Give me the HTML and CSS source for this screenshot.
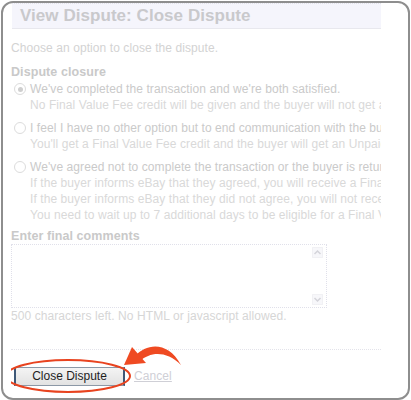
FILE: index.html
```html
<!DOCTYPE html>
<html>
<head>
<meta charset="utf-8">
<link rel="stylesheet" href="styles.css">
</head>
<body>
<div class="frame">
  <div class="content">
    <div class="titlebar"><h1 class="title">View Dispute: Close Dispute</h1></div>
    <p class="intro">Choose an option to close the dispute.</p>
    <div class="label">Dispute closure</div>
    <div class="option">
      <span class="radio checked"></span>
      <div class="otext">
        <div class="main">We've completed the transaction and we're both satisfied.</div>
        <div class="sub">No Final Value Fee credit will be given and the buyer will not get a strike.</div>
      </div>
    </div>
    <div class="option">
      <span class="radio"></span>
      <div class="otext">
        <div class="main">I feel I have no other option but to end communication with the buyer.</div>
        <div class="sub">You'll get a Final Value Fee credit and the buyer will get an Unpaid Item strike.</div>
      </div>
    </div>
    <div class="option">
      <span class="radio"></span>
      <div class="otext">
        <div class="main">We've agreed not to complete the transaction or the buyer is returning the item.</div>
        <div class="sub">If the buyer informs eBay that they agreed, you will receive a Final Value Fee credit.</div>
        <div class="sub">If the buyer informs eBay that they did not agree, you will not receive a credit.</div>
        <div class="sub">You need to wait up to 7 additional days to be eligible for a Final Value Fee credit.</div>
      </div>
    </div>
    <div class="label comments-label">Enter final comments</div>
    <div class="textarea">
      <div class="scroll">
        <svg class="arrow-btn" width="11" height="11" viewBox="0 0 11 11"><rect x="0.5" y="0.5" width="10" height="10" fill="#f7f7fa" stroke="#e6e6ec" stroke-dasharray="1 1"/><path d="M2.5 7 L5.5 4 L8.5 7" fill="none" stroke="#d4d4da" stroke-width="1.5"/></svg>
        <svg class="arrow-btn" width="11" height="11" viewBox="0 0 11 11"><rect x="0.5" y="0.5" width="10" height="10" fill="#f7f7fa" stroke="#e6e6ec" stroke-dasharray="1 1"/><path d="M2.5 4 L5.5 7 L8.5 4" fill="none" stroke="#d4d4da" stroke-width="1.5"/></svg>
      </div>
    </div>
    <div class="hint">500 characters left. No HTML or javascript allowed.</div>
    <div class="separator"></div>
    <div class="actions">
      <button class="btn">Close Dispute</button>
      <a class="cancel" href="#">Cancel</a>
      <svg class="callout" width="200" height="50" viewBox="0 0 200 50">
        <ellipse cx="63" cy="22" rx="62" ry="16" fill="none" stroke="#e8431f" stroke-width="2"/>
        <path d="M130 2 C142 -11 163 -13 176 11 C161 -4 145 -2 135 7 Z" fill="#ef4a22"/>
        <path d="M119 11 L127 -7 L141 9 Z" fill="#ef4a22"/>
      </svg>
    </div>
  </div>
</div>
</body>
</html>
```

FILE: styles.css
```css
html, body {
  margin: 0;
  padding: 0;
  background: #ffffff;
}
body {
  font-family: "Liberation Sans", Arial, sans-serif;
  font-size: 12px;
  letter-spacing: 0.08px;
  color: #d2d2d2;
}
.frame {
  margin: 1px 1px 0 1px;
  height: 395px;
  border: 2px solid #8e8e8e;
  border-radius: 12px;
  overflow: hidden;
  background: #fff;
}
.content {
  width: 370px;
  margin-left: 8px;
  overflow: hidden;
  white-space: nowrap;
  position: relative;
  padding-top: 0;
  padding-bottom: 20px;
}
.titlebar {
  margin-left: 1px;
  height: 24px;
  background: #f5f5fc;
  border-top: 1px dotted #e2e2ea;
  border-bottom: 1px solid #e8e8ee;
  padding-left: 8px;
}
.title {
  margin: 0;
  font-size: 17px;
  line-height: 23px;
  font-weight: bold;
  letter-spacing: 0.05px;
  color: #c9c9cc;
}
.intro {
  margin: 11px 0 0 0;
  line-height: 16px;
  color: #d3d3d3;
}
.label {
  margin-top: 8px;
  line-height: 16px;
  font-weight: bold;
  font-size: 12.5px;
  color: #c9c9c9;
}
.option {
  display: flex;
  gap: 4px;
  padding-left: 3px;
  margin-top: 1px;
  line-height: 16px;
}
.option + .option {
  margin-top: 7px;
}
.radio {
  flex: none;
  width: 10px;
  height: 10px;
  margin-top: 2px;
  border: 1px solid #dcdcdc;
  border-radius: 50%;
  position: relative;
  background: #fff;
}
.radio.checked::after {
  content: "";
  position: absolute;
  left: 2.5px;
  top: 2.5px;
  width: 5px;
  height: 5px;
  border-radius: 50%;
  background: #cfcfcf;
}
.otext {
  min-width: 0;
}
.main {
  color: #cacaca;
}
.sub {
  color: #d9d9d9;
}
.comments-label {
  margin-top: 6px;
  line-height: 15px;
}
.textarea {
  width: 314px;
  height: 62px;
  border: 1px dotted #e0e0ea;
  position: relative;
  display: flex;
  justify-content: flex-end;
}
.scroll {
  display: flex;
  flex-direction: column;
  justify-content: space-between;
  padding: 2px 3px 2px 0;
}
.arrow-btn {
  display: block;
}
.hint {
  margin-top: 0;
  line-height: 16px;
  color: #d6d6d6;
}
.separator {
  margin-top: 25px;
  border-top: 1px dotted #e3e3ea;
}
.actions {
  margin-top: 14px;
  display: flex;
  align-items: center;
  gap: 9px;
  padding-left: 3px;
  height: 24px;
  position: relative;
}
.btn {
  font-family: "Liberation Sans", Arial, sans-serif;
  font-size: 12px;
  color: #1e1e1e;
  width: 111px;
  height: 19px;
  padding: 0;
  background: linear-gradient(#f4f4f4, #e2e2e2);
  border: 1px solid #8c98a6;
  border-left: 2px solid #3f5877;
  border-right: 2px solid #3f5877;
}
.cancel {
  color: #cfcfd6;
  text-decoration: underline;
}
.callout {
  position: absolute;
  left: -6px;
  top: -10px;
  overflow: visible;
  pointer-events: none;
}
```
